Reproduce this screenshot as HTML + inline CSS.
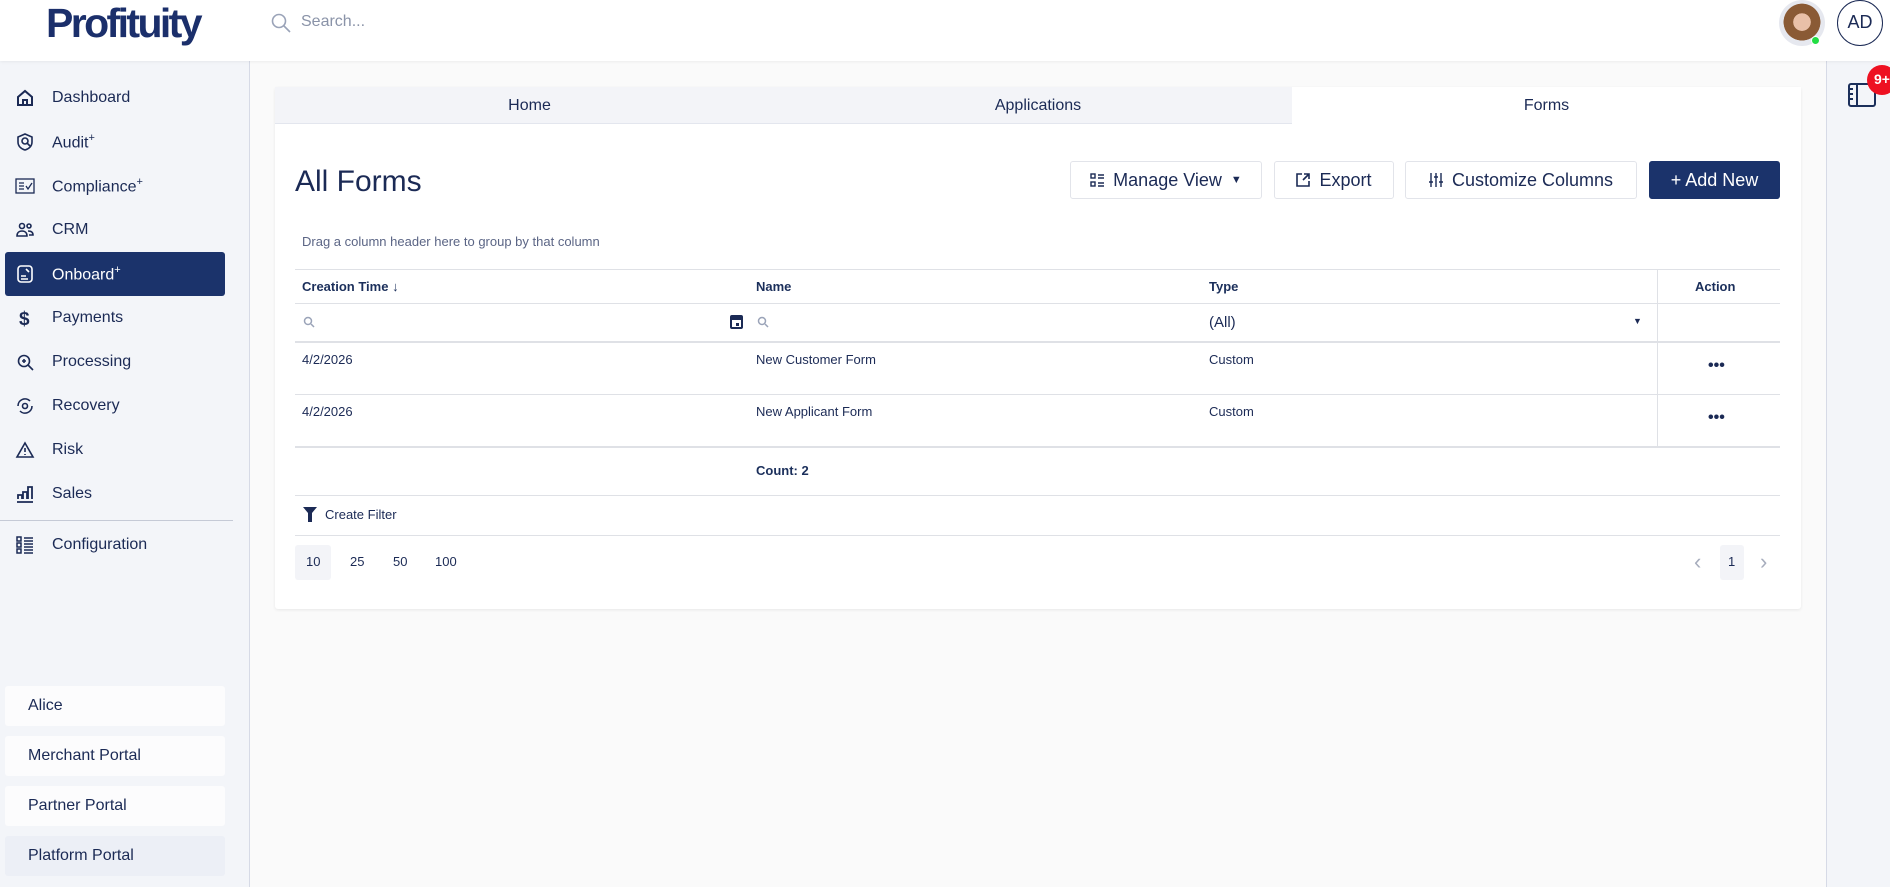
<!DOCTYPE html>
<html><head><meta charset="utf-8"><style>
*{box-sizing:border-box;margin:0;padding:0}
body{width:1890px;height:887px;overflow:hidden;font-family:"Liberation Sans",sans-serif;color:#1b2a55;background:#fafafa;position:relative}
.hdr{position:absolute;left:0;top:0;width:1890px;height:61px;background:#fff;box-shadow:0 1px 3px rgba(0,0,0,.06);z-index:2}
.logo{position:absolute;left:46px;top:0px;font-size:41px;font-weight:bold;color:#1b2f6b;letter-spacing:-2.6px}
.side{position:absolute;left:0;top:61px;width:250px;height:826px;background:#f3f5f9;border-right:1px solid #d6dae6}
.it{position:absolute;left:0;width:250px;height:44px;display:flex;align-items:center;font-size:16px;color:#1b2a55}
.it svg{position:absolute;left:15px;width:20px;height:20px}
.it span{position:absolute;left:52px}
.it sup{font-size:11px}
.act{left:5px;width:220px;background:#1b336b;color:#fff;border-radius:3px}
.act svg{left:10px}.act span{left:47px}
.pb{position:absolute;left:5px;width:220px;height:40px;background:#fcfcfd;border-radius:3px;font-size:16px;padding-left:23px;line-height:40px}
.rail{position:absolute;left:1826px;top:61px;width:64px;height:826px;background:#f3f5f9;border-left:1px solid #d6dae6}
.card{position:absolute;left:275px;top:87px;width:1526px;height:522px;background:#fff;box-shadow:0 1px 3px rgba(0,0,0,.08);border-radius:3px}
.tabs{position:absolute;left:0;top:0;width:1526px;height:37px;background:#f3f4f8;border-bottom:1px solid #e3e6ee}
.tab{position:absolute;top:0;height:37px;line-height:37px;text-align:center;font-size:16px}
.btn{position:absolute;top:74px;height:38px;border:1px solid #e2e4ea;border-radius:3px;background:#fff;font-size:18px;display:flex;align-items:center;justify-content:center;gap:9px}
.ln{position:absolute;left:20px;width:1485px;height:1px;background:#dfe1e6}
.th{position:absolute;font-size:13px;font-weight:bold;color:#1b2f5b}
.td{position:absolute;font-size:13px;color:#1b2a55}
</style></head><body>
<div class="hdr">
<div class="logo">Profituity</div>
<svg style="position:absolute;left:270px;top:12px" width="22" height="22" viewBox="0 0 22 22"><circle cx="9" cy="9" r="6.5" fill="none" stroke="#9aa3b8" stroke-width="1.6"/><line x1="14" y1="14" x2="20" y2="20" stroke="#9aa3b8" stroke-width="1.6"/></svg>
<div style="position:absolute;left:301px;top:13px;font-size:16px;color:#8a93a8">Search...</div>
<div style="position:absolute;left:1779px;top:0;width:46px;height:46px;border-radius:50%;background:radial-gradient(circle at 50% 48%,#e9c0a8 0 26%,#8a5a35 27% 55%,#e6e8ef 56%)"></div>
<div style="position:absolute;left:1811px;top:36px;width:9px;height:9px;border-radius:50%;background:#22dd44;border:1px solid #fff"></div>
<div style="position:absolute;left:1837px;top:0px;width:46px;height:46px;border-radius:50%;border:1.5px solid #1b2a55;font-size:18px;text-align:center;line-height:43px">AD</div>
</div>
<div class="side">
<div class="it" style="top:15px"><svg viewBox="0 0 20 20" fill="none" stroke="#1b2a55" stroke-width="2"><path d="M3 9l7-6 7 6v8H3z M8 17v-5h4v5"/></svg><span>Dashboard</span></div>
<div class="it" style="top:59px"><svg viewBox="0 0 20 20" fill="none" stroke="#1b2a55" stroke-width="1.6"><path d="M10 2l7 3v5c0 4-3 7-7 8-4-1-7-4-7-8V5z"/><circle cx="10" cy="9" r="3"/><path d="M12 11l3 3"/></svg><span>Audit<sup>+</sup></span></div>
<div class="it" style="top:103px"><svg viewBox="0 0 20 20" fill="none" stroke="#1b2a55" stroke-width="1.3"><rect x="1" y="3" width="18" height="14"/><path d="M4 7h5M4 10h5M4 13h5M11 10l2 3 4-6"/></svg><span>Compliance<sup>+</sup></span></div>
<div class="it" style="top:147px"><svg viewBox="0 0 20 20" fill="none" stroke="#1b2a55" stroke-width="1.6"><circle cx="7" cy="6" r="2.5"/><circle cx="14" cy="6" r="2"/><path d="M2 16c0-4 3-5 5-5s5 1 5 5zM13 11c3 0 5 1 5 4h-4"/></svg><span>CRM</span></div>
<div class="it act" style="top:191px"><svg viewBox="0 0 20 20" fill="none" stroke="#fff" stroke-width="1.6"><rect x="3" y="2" width="14" height="16" rx="3"/><path d="M6 12h5M6 15h7M11 5l3 3"/></svg><span>Onboard<sup>+</sup></span></div>
<div class="it" style="top:235px"><svg viewBox="0 0 20 20"><text x="4" y="17" font-size="19" font-weight="bold" fill="#1b2a55" font-family="Liberation Sans">$</text></svg><span>Payments</span></div>
<div class="it" style="top:279px"><svg viewBox="0 0 20 20" fill="none" stroke="#1b2a55" stroke-width="1.6"><circle cx="9" cy="9" r="5.5"/><path d="M13 13l5 5M7 9h4M9 7v4"/></svg><span>Processing</span></div>
<div class="it" style="top:323px"><svg viewBox="0 0 20 20" fill="none" stroke="#1b2a55" stroke-width="1.6"><path d="M3 10a7 7 0 0 1 12-5M17 10a7 7 0 0 1-12 5"/><circle cx="10" cy="10" r="2.5"/></svg><span>Recovery</span></div>
<div class="it" style="top:367px"><svg viewBox="0 0 20 20" fill="none" stroke="#1b2a55" stroke-width="1.6"><path d="M10 3l8 14H2z M10 8v4M10 14v1"/></svg><span>Risk</span></div>
<div class="it" style="top:411px"><svg viewBox="0 0 20 20" fill="none" stroke="#1b2a55" stroke-width="1.8"><path d="M2 18h16M3 15v-4h4v4M8 15V8h4v7M13 15V3h4v12"/></svg><span>Sales</span></div>
<div style="position:absolute;left:0;top:459px;width:233px;height:1px;background:#c5cad6"></div>
<div class="it" style="top:462px"><svg viewBox="0 0 20 20" fill="none" stroke="#1b2a55" stroke-width="1.5"><rect x="2" y="2" width="4" height="4"/><rect x="2" y="8" width="4" height="4"/><rect x="2" y="14" width="4" height="4"/><path d="M9 3h9M9 6h9M9 9h9M9 12h9M9 15h9M9 18h9"/></svg><span>Configuration</span></div>
<div class="pb" style="top:625px">Alice</div>
<div class="pb" style="top:675px">Merchant Portal</div>
<div class="pb" style="top:725px">Partner Portal</div>
<div class="pb" style="top:775px;background:#eceff6">Platform Portal</div>
</div>
<div class="rail">
<svg style="position:absolute;left:21px;top:21px" width="30" height="26" viewBox="0 0 30 26" fill="none" stroke="#1b2f5b" stroke-width="2"><rect x="1" y="2" width="26" height="22" rx="2"/><path d="M9 2v22M1 7h4M1 12h4M1 17h4"/></svg>
<div style="position:absolute;left:40px;top:4px;width:30px;height:30px;border-radius:50%;background:#ee1122;color:#fff;font-size:14px;font-weight:bold;line-height:28px;padding-left:7px">9+</div>
</div>
<div class="card">
<div class="tabs">
<div class="tab" style="left:0;width:509px">Home</div>
<div class="tab" style="left:509px;width:508px">Applications</div>
<div class="tab" style="left:1017px;width:509px;background:#fff;height:38px">Forms</div>
</div>
<div style="position:absolute;left:20px;top:78px;font-size:30px;color:#1b2a55">All Forms</div>
<div class="btn" style="left:795px;width:192px"><svg width="14" height="14" viewBox="0 0 14 14" fill="none" stroke="#1b2a55" stroke-width="1.4"><rect x="1" y="1" width="4" height="4"/><rect x="1" y="9" width="4" height="4"/><path d="M8 2h6M8 5h6M8 10h6M8 13h6"/></svg>Manage View <span style="font-size:11px">▼</span></div>
<div class="btn" style="left:999px;width:120px"><svg width="14" height="14" viewBox="0 0 14 14" fill="none" stroke="#1b2a55" stroke-width="1.6"><path d="M6 1H1v12h12V8M8 1h5v5M13 1L7 7"/></svg>Export</div>
<div class="btn" style="left:1130px;width:232px"><svg width="14" height="16" viewBox="0 0 14 16" fill="none" stroke="#1b2a55" stroke-width="1.4"><path d="M2 1v14M7 1v14M12 1v14M0 10h4M5 5h4M10 10h4"/></svg>Customize Columns</div>
<div class="btn" style="left:1374px;width:131px;background:#1b336b;color:#fff;border-color:#1b336b">+ Add New</div>
<div style="position:absolute;left:27px;top:147px;font-size:13px;color:#5b6585">Drag a column header here to group by that column</div>
<div class="ln" style="top:182px"></div>
<div class="ln" style="top:216px"></div>
<div class="ln" style="top:254px;height:2px"></div>
<div class="ln" style="top:307px"></div>
<div class="ln" style="top:359px;height:2px"></div>
<div class="ln" style="top:408px"></div>
<div class="ln" style="top:448px"></div>
<div style="position:absolute;left:1382px;top:182px;width:1px;height:178px;background:#dfe1e6"></div>
<div class="th" style="left:27px;top:192px">Creation Time <span style="font-weight:normal">↓</span></div>
<div class="th" style="left:481px;top:192px">Name</div>
<div class="th" style="left:934px;top:192px">Type</div>
<div class="th" style="left:1420px;top:192px">Action</div>
<svg style="position:absolute;left:28px;top:229px" width="12" height="12" viewBox="0 0 12 12" fill="none" stroke="#9aa3b8" stroke-width="1.5"><circle cx="5" cy="5" r="3.5"/><path d="M8 8l3 3"/></svg>
<svg style="position:absolute;left:455px;top:227px" width="13" height="15" viewBox="0 0 13 15"><rect x="1" y="2" width="11" height="12" rx="1" fill="none" stroke="#1b2a55" stroke-width="2"/><rect x="1" y="2" width="11" height="4" fill="#1b2a55"/><rect x="6" y="9" width="3" height="3" fill="#1b2a55"/></svg>
<svg style="position:absolute;left:482px;top:229px" width="12" height="12" viewBox="0 0 12 12" fill="none" stroke="#9aa3b8" stroke-width="1.5"><circle cx="5" cy="5" r="3.5"/><path d="M8 8l3 3"/></svg>
<div class="td" style="left:934px;top:227px;font-size:15px">(All)</div>
<div class="td" style="left:1358px;top:229px;font-size:9px">▼</div>
<div class="td" style="left:27px;top:265px">4/2/2026</div>
<div class="td" style="left:481px;top:265px">New Customer Form</div>
<div class="td" style="left:934px;top:265px">Custom</div>
<div class="td" style="left:1433px;top:270px;font-weight:bold;font-size:16px">•••</div>
<div class="td" style="left:27px;top:317px">4/2/2026</div>
<div class="td" style="left:481px;top:317px">New Applicant Form</div>
<div class="td" style="left:934px;top:317px">Custom</div>
<div class="td" style="left:1433px;top:322px;font-weight:bold;font-size:16px">•••</div>
<div class="th" style="left:481px;top:376px">Count: 2</div>
<svg style="position:absolute;left:28px;top:420px" width="14" height="15" viewBox="0 0 14 15"><path d="M0 0h14L9 6v9H5V6z" fill="#1b2a55"/></svg>
<div class="td" style="left:50px;top:420px">Create Filter</div>
<div style="position:absolute;left:20px;top:458px;width:36px;height:35px;background:#f3f4f8;border-radius:3px"></div>
<div class="td" style="left:31px;top:467px">10</div>
<div class="td" style="left:75px;top:467px">25</div>
<div class="td" style="left:118px;top:467px">50</div>
<div class="td" style="left:160px;top:467px">100</div>
<div class="td" style="left:1419px;top:462px;font-size:22px;color:#a7adbd">‹</div>
<div style="position:absolute;left:1445px;top:458px;width:24px;height:35px;background:#f3f4f8;border-radius:3px"></div>
<div class="td" style="left:1453px;top:467px">1</div>
<div class="td" style="left:1485px;top:462px;font-size:22px;color:#a7adbd">›</div>
</div>
</body></html>
